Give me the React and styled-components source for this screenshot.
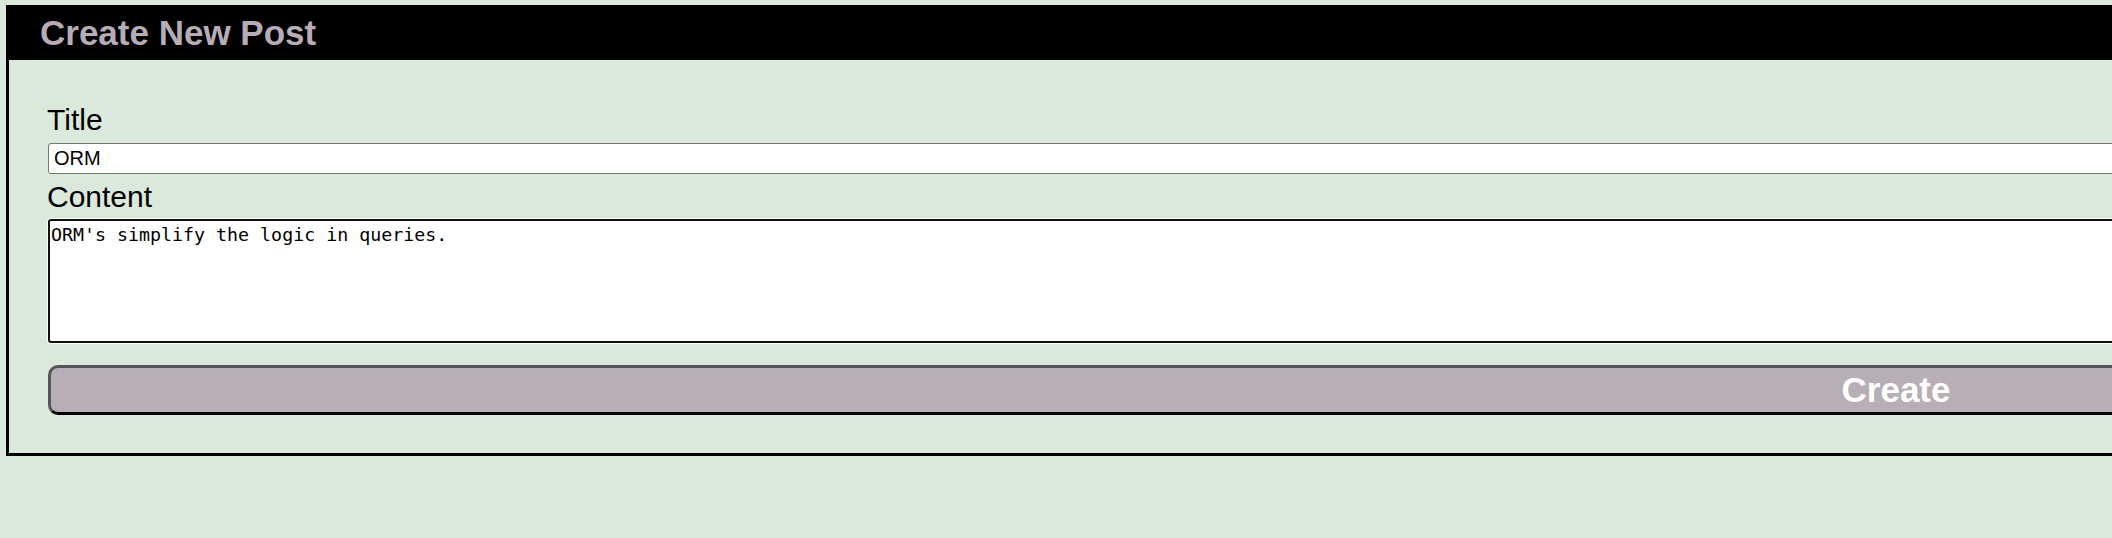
import React from "react";
import styled, { createGlobalStyle } from "styled-components";

const GlobalStyle = createGlobalStyle`
  html, body {
    margin: 0;
    padding: 0;
    background-color: #dbe9dc;
    font-family: "Liberation Sans", Arial, sans-serif;
    overflow: hidden;
  }
`;

const App = () => {
  return (
    <Page>
      <GlobalStyle />
      <Card>
        <Header>Create New Post</Header>
        <Form onSubmit={(e) => e.preventDefault()}>
          <Label htmlFor="title">Title</Label>
          <TitleInput id="title" type="text" defaultValue="ORM" />
          <Label htmlFor="content" $gap="7px">
            Content
          </Label>
          <ContentArea
            id="content"
            defaultValue="ORM's simplify the logic in queries."
          />
          <CreateButton type="submit">Create</CreateButton>
        </Form>
      </Card>
    </Page>
  );
};

export default App;

const Page = styled.div`
  padding: 5px 0 0 6px;
  min-height: 538px;
  box-sizing: border-box;
`;

const Card = styled.div`
  width: 3780px;
  border: 3px solid #000;
  box-sizing: border-box;
`;

const Header = styled.h2`
  margin: 0;
  height: 52px;
  line-height: 50px;
  padding-left: 31px;
  background-color: #000;
  color: #b7adb7;
  font-size: 35px;
  font-weight: bold;
`;

const Form = styled.form`
  display: flex;
  flex-direction: column;
  padding: 44px 39px 38px 38px;
`;

const Label = styled.label`
  display: block;
  font-size: 30px;
  line-height: 31px;
  color: #000;
  margin-top: ${(p) => p.$gap || "0"};
`;

const TitleInput = styled.input`
  margin-top: 8px;
  margin-left: 1px;
  height: 31px;
  box-sizing: border-box;
  border: 1px solid #767676;
  border-radius: 3px;
  padding: 0 5px;
  font-family: "Liberation Sans", Arial, sans-serif;
  font-size: 20px;
  color: #000;
  background: #fff;
`;

const ContentArea = styled.textarea`
  margin-top: 7px;
  margin-left: 1px;
  height: 124px;
  box-sizing: border-box;
  border: 2px solid #101010;
  border-radius: 3px;
  box-shadow: 0 0 0 1px #fff;
  padding: 2px 1px;
  font-family: "DejaVu Sans Mono", monospace;
  font-size: 18.3px;
  line-height: 24px;
  color: #000;
  background: #fff;
  resize: none;
  outline: none;
`;

const CreateButton = styled.button`
  margin-top: 22px;
  margin-left: 1px;
  height: 50px;
  border-width: 3px;
  border-style: solid;
  border-color: #555 #000 #000 #555;
  border-radius: 10px;
  background-color: #b8aeb5;
  color: #fff;
  font-family: "Liberation Sans", Arial, sans-serif;
  font-size: 35px;
  font-weight: bold;
  cursor: pointer;
`;
